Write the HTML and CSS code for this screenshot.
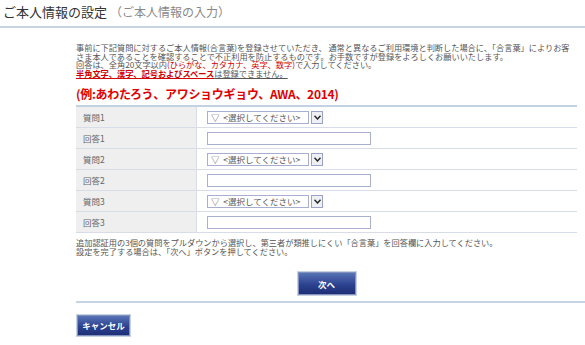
FILE: index.html
```html
<!DOCTYPE html>
<html lang="ja">
<head>
    <meta charset="UTF-8">
    <title>ご本人情報の設定</title>
    <link rel="stylesheet" href="styles.css">
</head>
<body>
    <h1 class="page-title">ご本人情報の設定 <span class="sub">（ご本人情報の入力）</span></h1>

    <div class="content">
        <p class="intro">
            <span class="line">事前に下記質問に対するご本人情報(合言葉)を登録させていただき、 通常と異なるご利用環境と判断した場合に、「合言葉」によりお客</span>
            <span class="line">さま本人であることを確認することで不正利用を防止するものです。お手数ですが登録をよろしくお願いいたします。</span>
            <span class="line">回答は、全角20文字以内<em class="red">(ひらがな、カタカナ、英字、数字)</em>で入力してください。</span>
            <span class="line"><strong class="red under">半角文字、漢字、記号およびスペース</strong><span class="under">は登録できません。</span></span>
        </p>

        <p class="example">(例:あわたろう、アワショウギョウ、AWA、2014)</p>

        <form id="qaForm" onsubmit="return false;">
            <table class="qa">
                <tr>
                    <th>質問1</th>
                    <td>
                        <div class="pick">
                            <select name="q1"><option>▽&nbsp;&nbsp;&lt;選択してください&gt;</option></select>
                            <span class="arrow"><svg width="7" height="5" viewBox="0 0 7 5"><path d="M0.5 0.8 L3.5 4 L6.5 0.8" fill="none" stroke="#222" stroke-width="1.4"/></svg></span>
                        </div>
                    </td>
                </tr>
                <tr>
                    <th>回答1</th>
                    <td><input type="text" name="a1"></td>
                </tr>
                <tr>
                    <th>質問2</th>
                    <td>
                        <div class="pick">
                            <select name="q2"><option>▽&nbsp;&nbsp;&lt;選択してください&gt;</option></select>
                            <span class="arrow"><svg width="7" height="5" viewBox="0 0 7 5"><path d="M0.5 0.8 L3.5 4 L6.5 0.8" fill="none" stroke="#222" stroke-width="1.4"/></svg></span>
                        </div>
                    </td>
                </tr>
                <tr>
                    <th>回答2</th>
                    <td><input type="text" name="a2"></td>
                </tr>
                <tr>
                    <th>質問3</th>
                    <td>
                        <div class="pick">
                            <select name="q3"><option>▽&nbsp;&nbsp;&lt;選択してください&gt;</option></select>
                            <span class="arrow"><svg width="7" height="5" viewBox="0 0 7 5"><path d="M0.5 0.8 L3.5 4 L6.5 0.8" fill="none" stroke="#222" stroke-width="1.4"/></svg></span>
                        </div>
                    </td>
                </tr>
                <tr>
                    <th>回答3</th>
                    <td><input type="text" name="a3"></td>
                </tr>
            </table>

            <p class="note">
                <span class="line">追加認証用の3個の質問をプルダウンから選択し、第三者が類推しにくい「合言葉」を回答欄に入力してください。</span>
                <span class="line">設定を完了する場合は、「次へ」ボタンを押してください。</span>
            </p>

            <div class="actions">
                <button type="submit" class="btn btn-next">次へ</button>
            </div>
        </form>
    </div>

    <div class="footer">
        <button type="button" class="btn btn-cancel">キャンセル</button>
    </div>
</body>
</html>
```

FILE: styles.css
```css
body {
    font-family: "Noto Sans CJK JP", "Liberation Sans", sans-serif;
    background: #ffffff;
    color: #555;
    margin: 0;
    padding: 0;
}

.page-title {
    font-size: 13px;
    font-weight: normal;
    color: #333;
    margin: 0;
    padding: 3px 3px 5px;
    line-height: 18px;
    border-bottom: 2px solid #c6d3e1;
}

.page-title .sub {
    font-size: 12px;
    color: #888;
}

.content {
    margin-left: 76px;
    width: 501px;
}

.intro {
    margin: 15px 0 0;
    font-size: 8.2px;
    line-height: 8.5px;
    color: #555;
}

.line {
    display: block;
    white-space: nowrap;
}

.red {
    color: #d00000;
    font-style: normal;
}

strong.red {
    font-weight: bold;
}

.under {
    text-decoration: underline;
}

.example {
    margin: 9px 0 0 0;
    font-size: 12px;
    line-height: 16px;
    font-weight: bold;
    color: #e00000;
    letter-spacing: -0.3px;
}

form {
    margin: 0;
}

.qa {
    margin-top: 3px;
    width: 501px;
    border-collapse: collapse;
    border-top: 2px solid #c3d2e2;
}

.qa th,
.qa td {
    height: 20px;
    padding: 0;
    font-size: 8.5px;
    line-height: 10px;
    border-bottom: 1px solid #d7dce6;
}

.qa th {
    width: 113px;
    padding-left: 7px;
    text-align: left;
    font-weight: normal;
    color: #666;
    background: #efefef;
    border-right: 1px solid #d7dce6;
}

.qa td {
    padding-left: 10px;
}

.pick {
    display: flex;
    align-items: center;
    gap: 2px;
}

.pick select {
    appearance: none;
    -webkit-appearance: none;
    width: 102px;
    height: 13px;
    padding: 0 0 0 3px;
    margin: 0;
    font-family: inherit;
    font-size: 8.5px;
    line-height: 11px;
    color: #555;
    background: #fff;
    border: 1px solid #a7aed0;
    border-radius: 0;
}

.pick .arrow {
    display: flex;
    align-items: center;
    justify-content: center;
    width: 10px;
    height: 11px;
    background: #eef0f4;
    border: 1px solid #9aa2c8;
}

.qa input {
    display: block;
    width: 164px;
    height: 13px;
    margin: 0;
    padding: 0;
    box-sizing: border-box;
    border: 1px solid #a9b0cf;
    border-radius: 0;
}

.note {
    margin: 5px 0 0;
    font-size: 8.2px;
    line-height: 8.5px;
    color: #555;
}

.actions {
    display: flex;
    justify-content: center;
    padding: 16px 0 5px;
}

.btn {
    font-family: inherit;
    font-size: 8.5px;
    font-weight: bold;
    color: #fff;
    background: linear-gradient(#5b78b9, #2c4290 55%, #1c2c72);
    border: 1px solid #c9d2e3;
    outline: 1px solid #8192bf;
    outline-offset: -2px;
    cursor: pointer;
    padding: 0;
}

.btn:hover {
    opacity: 0.8;
}

.btn-next {
    width: 60px;
    height: 25px;
}

.footer {
    margin-left: 76px;
    border-top: 2px solid #c6d3e1;
    padding-top: 7px;
}

.btn-cancel {
    width: 55px;
    height: 23px;
}
```
